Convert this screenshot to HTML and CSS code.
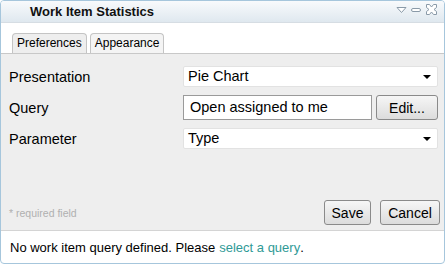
FILE: index.html
```html
<!DOCTYPE html>
<html lang="en">

<head>
   <meta charset="UTF-8">
   <title>Work Item Statistics</title>
   <link rel="stylesheet" href="styles.css">
</head>

<body>
   <div class="panel">
      <div class="titlebar">
         <span class="title">Work Item Statistics</span>
         <div class="tools">
            <svg width="11" height="8" viewBox="0 0 11 8"><path d="M1 1.5 H10 L5.5 6.5 Z" fill="#fff" stroke="#8a9aa8" stroke-width="1"/></svg>
            <svg width="12" height="8" viewBox="0 0 12 8"><rect x="1.5" y="2.5" width="9" height="3" rx="1.5" fill="#fff" stroke="#8a9aa8"/></svg>
            <svg width="13" height="13" viewBox="0 0 13 13"><path d="M1.5 1.5 H4.5 L6.5 4 L8.5 1.5 H11.5 V4.5 L9 6.5 L11.5 8.5 V11.5 H8.5 L6.5 9 L4.5 11.5 H1.5 V8.5 L4 6.5 L1.5 4.5 Z" fill="#fff" stroke="#8a9aa8" stroke-linejoin="round"/></svg>
         </div>
      </div>

      <div class="tabbar">
         <div class="tab active">Preferences</div>
         <div class="tab">Appearance</div>
      </div>

      <div class="content">
         <div class="form">
            <label>Presentation</label>
            <div class="select">Pie Chart<span class="arrow"></span></div>

            <label>Query</label>
            <div class="query">
               <div class="input">Open assigned to me</div>
               <button class="btn edit">Edit...</button>
            </div>

            <label>Parameter</label>
            <div class="select">Type<span class="arrow"></span></div>
         </div>

         <div class="actions">
            <span class="required">* required field</span>
            <div class="buttons">
               <button class="btn save">Save</button>
               <button class="btn cancel">Cancel</button>
            </div>
         </div>
      </div>

      <div class="footer">
         No work item query defined. Please <a href="#">select a query</a>.
      </div>
   </div>
</body>

</html>
```

FILE: styles.css
```css
body {
   margin: 0;
   font-family: 'Liberation Sans', Arial, sans-serif;
   color: #000;
   background-color: #fff;
}

.panel {
   width: 443px;
   height: 262px;
   border: 1px solid #a6c6dc;
   border-radius: 4px;
   display: flex;
   flex-direction: column;
   overflow: hidden;
   background-color: #fff;
}

.titlebar {
   height: 21px;
   flex: none;
   display: flex;
   align-items: center;
   justify-content: space-between;
   border-bottom: 1px solid #d6dde3;
   background: linear-gradient(#f8fafc, #dfe8ef);
}

.title {
   margin-left: 29px;
   font-size: 13px;
   font-weight: bold;
   color: #111;
}

.tools {
   display: flex;
   align-items: center;
   gap: 3px;
   margin-right: 6px;
   margin-top: -4px;
}

.tabbar {
   height: 30px;
   flex: none;
   display: flex;
   align-items: flex-end;
   gap: 3px;
   padding-left: 11px;
   border-bottom: 1px solid #c8c8c8;
}

.tab {
   height: 19px;
   padding: 0 4px;
   font-size: 12px;
   line-height: 19px;
   border: 1px solid #c4c4c4;
   border-bottom: none;
   border-radius: 4px 4px 0 0;
   background-color: #f4f4f4;
}

.tab.active {
   background-color: #eeeeee;
}

.content {
   flex: 1;
   display: flex;
   flex-direction: column;
   justify-content: space-between;
   padding: 12px 4px 5px 8px;
   background-color: #eeeeee;
}

.form {
   display: grid;
   grid-template-columns: 174px 255px;
   row-gap: 8px;
   align-items: center;
}

.form label {
   font-size: 14.5px;
}

.select {
   position: relative;
   height: 19px;
   line-height: 19px;
   padding-left: 4px;
   font-size: 14.5px;
   background-color: #fff;
   border: 1px solid #e2e2e2;
   border-radius: 2px;
}

.arrow {
   position: absolute;
   right: 6px;
   top: 8px;
   border-left: 4px solid transparent;
   border-right: 4px solid transparent;
   border-top: 4px solid #000;
}

.query {
   display: flex;
   gap: 4px;
}

.input {
   width: 181px;
   height: 23px;
   line-height: 23px;
   padding-left: 6px;
   font-size: 14.5px;
   background-color: #fff;
   border: 1px solid #9a9a9a;
}

.btn {
   height: 25px;
   padding: 0;
   font-family: 'Liberation Sans', Arial, sans-serif;
   font-size: 14px;
   color: #000;
   border: 1px solid #8a8a8a;
   border-radius: 3px;
   background: linear-gradient(#f6f6f6, #dcdcdc);
}

.edit {
   width: 62px;
}

.actions {
   display: flex;
   align-items: center;
   justify-content: space-between;
}

.required {
   font-size: 10.5px;
   color: #b0b0b0;
}

.buttons {
   display: flex;
   gap: 9px;
}

.save {
   width: 47px;
}

.cancel {
   width: 60px;
}

.footer {
   height: 32px;
   flex: none;
   display: flex;
   align-items: center;
   padding-left: 9px;
   font-size: 13px;
   border-top: 1px solid #d4d4d4;
}

.footer a {
   color: #2f9a96;
   text-decoration: none;
   margin-left: 4px;
}
```
